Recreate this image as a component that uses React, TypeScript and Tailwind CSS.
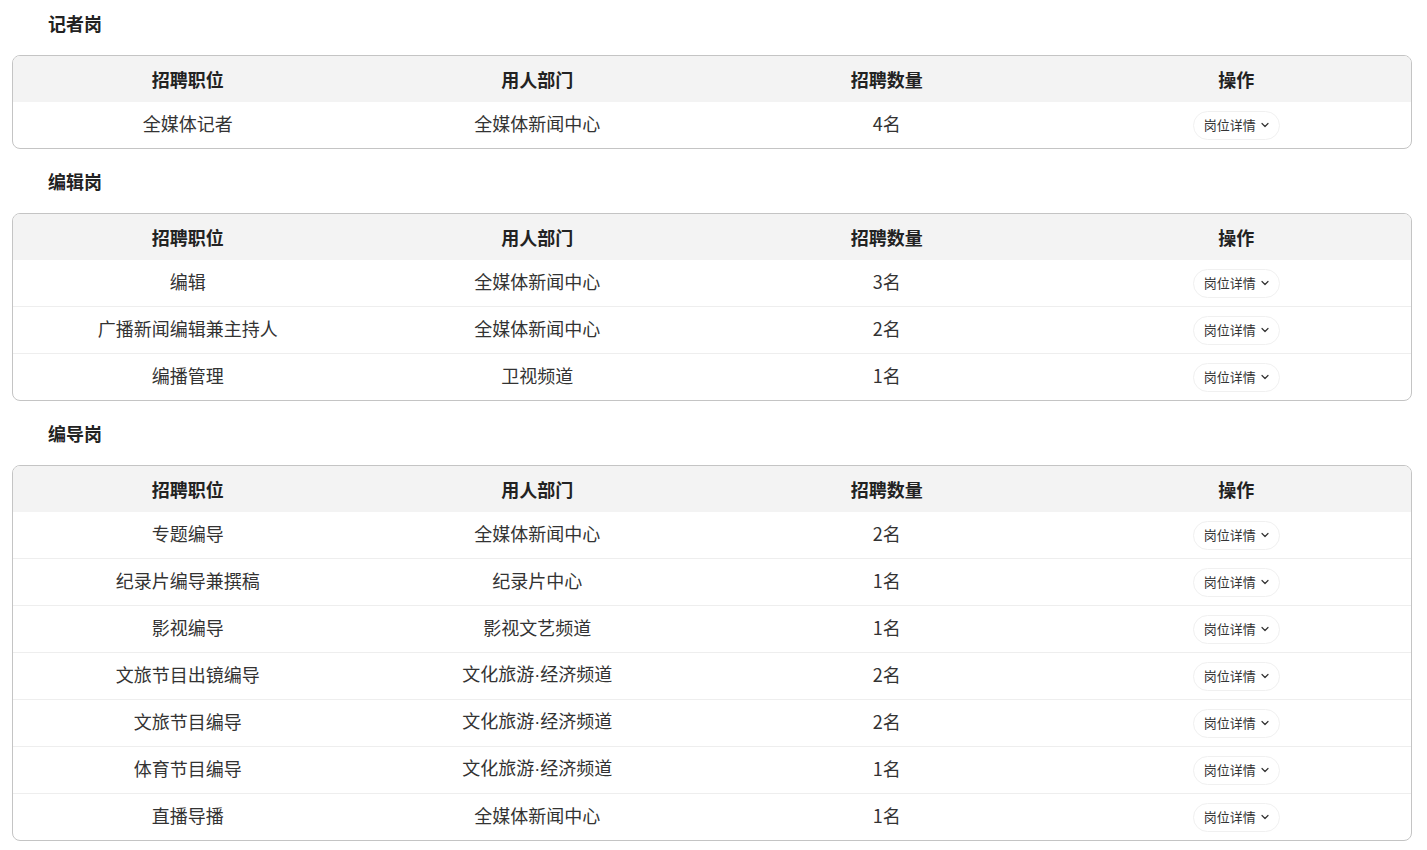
import { ChevronDown } from "lucide-react"

type Job = { title: string; dept: string; count: string }

const sections: { name: string; jobs: Job[] }[] = [
  {
    name: "记者岗",
    jobs: [{ title: "全媒体记者", dept: "全媒体新闻中心", count: "4名" }],
  },
  {
    name: "编辑岗",
    jobs: [
      { title: "编辑", dept: "全媒体新闻中心", count: "3名" },
      { title: "广播新闻编辑兼主持人", dept: "全媒体新闻中心", count: "2名" },
      { title: "编播管理", dept: "卫视频道", count: "1名" },
    ],
  },
  {
    name: "编导岗",
    jobs: [
      { title: "专题编导", dept: "全媒体新闻中心", count: "2名" },
      { title: "纪录片编导兼撰稿", dept: "纪录片中心", count: "1名" },
      { title: "影视编导", dept: "影视文艺频道", count: "1名" },
      { title: "文旅节目出镜编导", dept: "文化旅游·经济频道", count: "2名" },
      { title: "文旅节目编导", dept: "文化旅游·经济频道", count: "2名" },
      { title: "体育节目编导", dept: "文化旅游·经济频道", count: "1名" },
      { title: "直播导播", dept: "全媒体新闻中心", count: "1名" },
    ],
  },
]

const font = { fontFamily: '"Noto Sans CJK SC", "Noto Sans", sans-serif' }

// the middle dot should be the narrow latin one, not the full-width CJK glyph
function Dept({ text }: { text: string }) {
  const parts = text.split("·")
  if (parts.length < 2) return <>{text}</>
  return (
    <>
      {parts[0]}
      <span className="font-['Liberation_Sans',sans-serif]">·</span>
      {parts[1]}
    </>
  )
}

function JobTable({ jobs }: { jobs: Job[] }) {
  return (
    <div className="ml-[12px] mr-[15px] overflow-hidden rounded-[8px] border border-[#c4c4c4]">
      <div className="grid h-[46px] grid-cols-4 items-center bg-[#f3f3f3] text-[18px] font-bold text-[#222]">
        <div className="text-center">招聘职位</div>
        <div className="text-center">用人部门</div>
        <div className="text-center">招聘数量</div>
        <div className="text-center">操作</div>
      </div>
      {jobs.map((job, i) => (
        <div
          key={job.title}
          className={
            "grid h-[46px] grid-cols-4 items-center text-[18px] text-[#333] " +
            (i > 0 ? "box-content border-t border-[#eeeeee]" : "")
          }
        >
          <div className="pb-[4px] text-center">{job.title}</div>
          <div className="pb-[4px] text-center">
            <Dept text={job.dept} />
          </div>
          <div className="pb-[4px] text-center">{job.count}</div>
          <div className="flex justify-center">
            <button className="flex h-[29px] items-center gap-[3px] rounded-full border border-[#f0f0f0] bg-white pl-[10px] pr-[8px] text-[13px] text-[#333]">
              岗位详情
              <ChevronDown className="h-[12px] w-[12px]" strokeWidth={2.4} />
            </button>
          </div>
        </div>
      ))}
    </div>
  )
}

export default function App() {
  return (
    <main className="min-h-screen bg-white" style={font}>
      {sections.map((s) => (
        <section key={s.name} className="mb-[9px]">
          <h2 className="h-[55px] pl-[48px] pt-[11px] text-[18px] leading-[24px] font-bold text-[#222]">{s.name}</h2>
          <JobTable jobs={s.jobs} />
        </section>
      ))}
    </main>
  )
}
